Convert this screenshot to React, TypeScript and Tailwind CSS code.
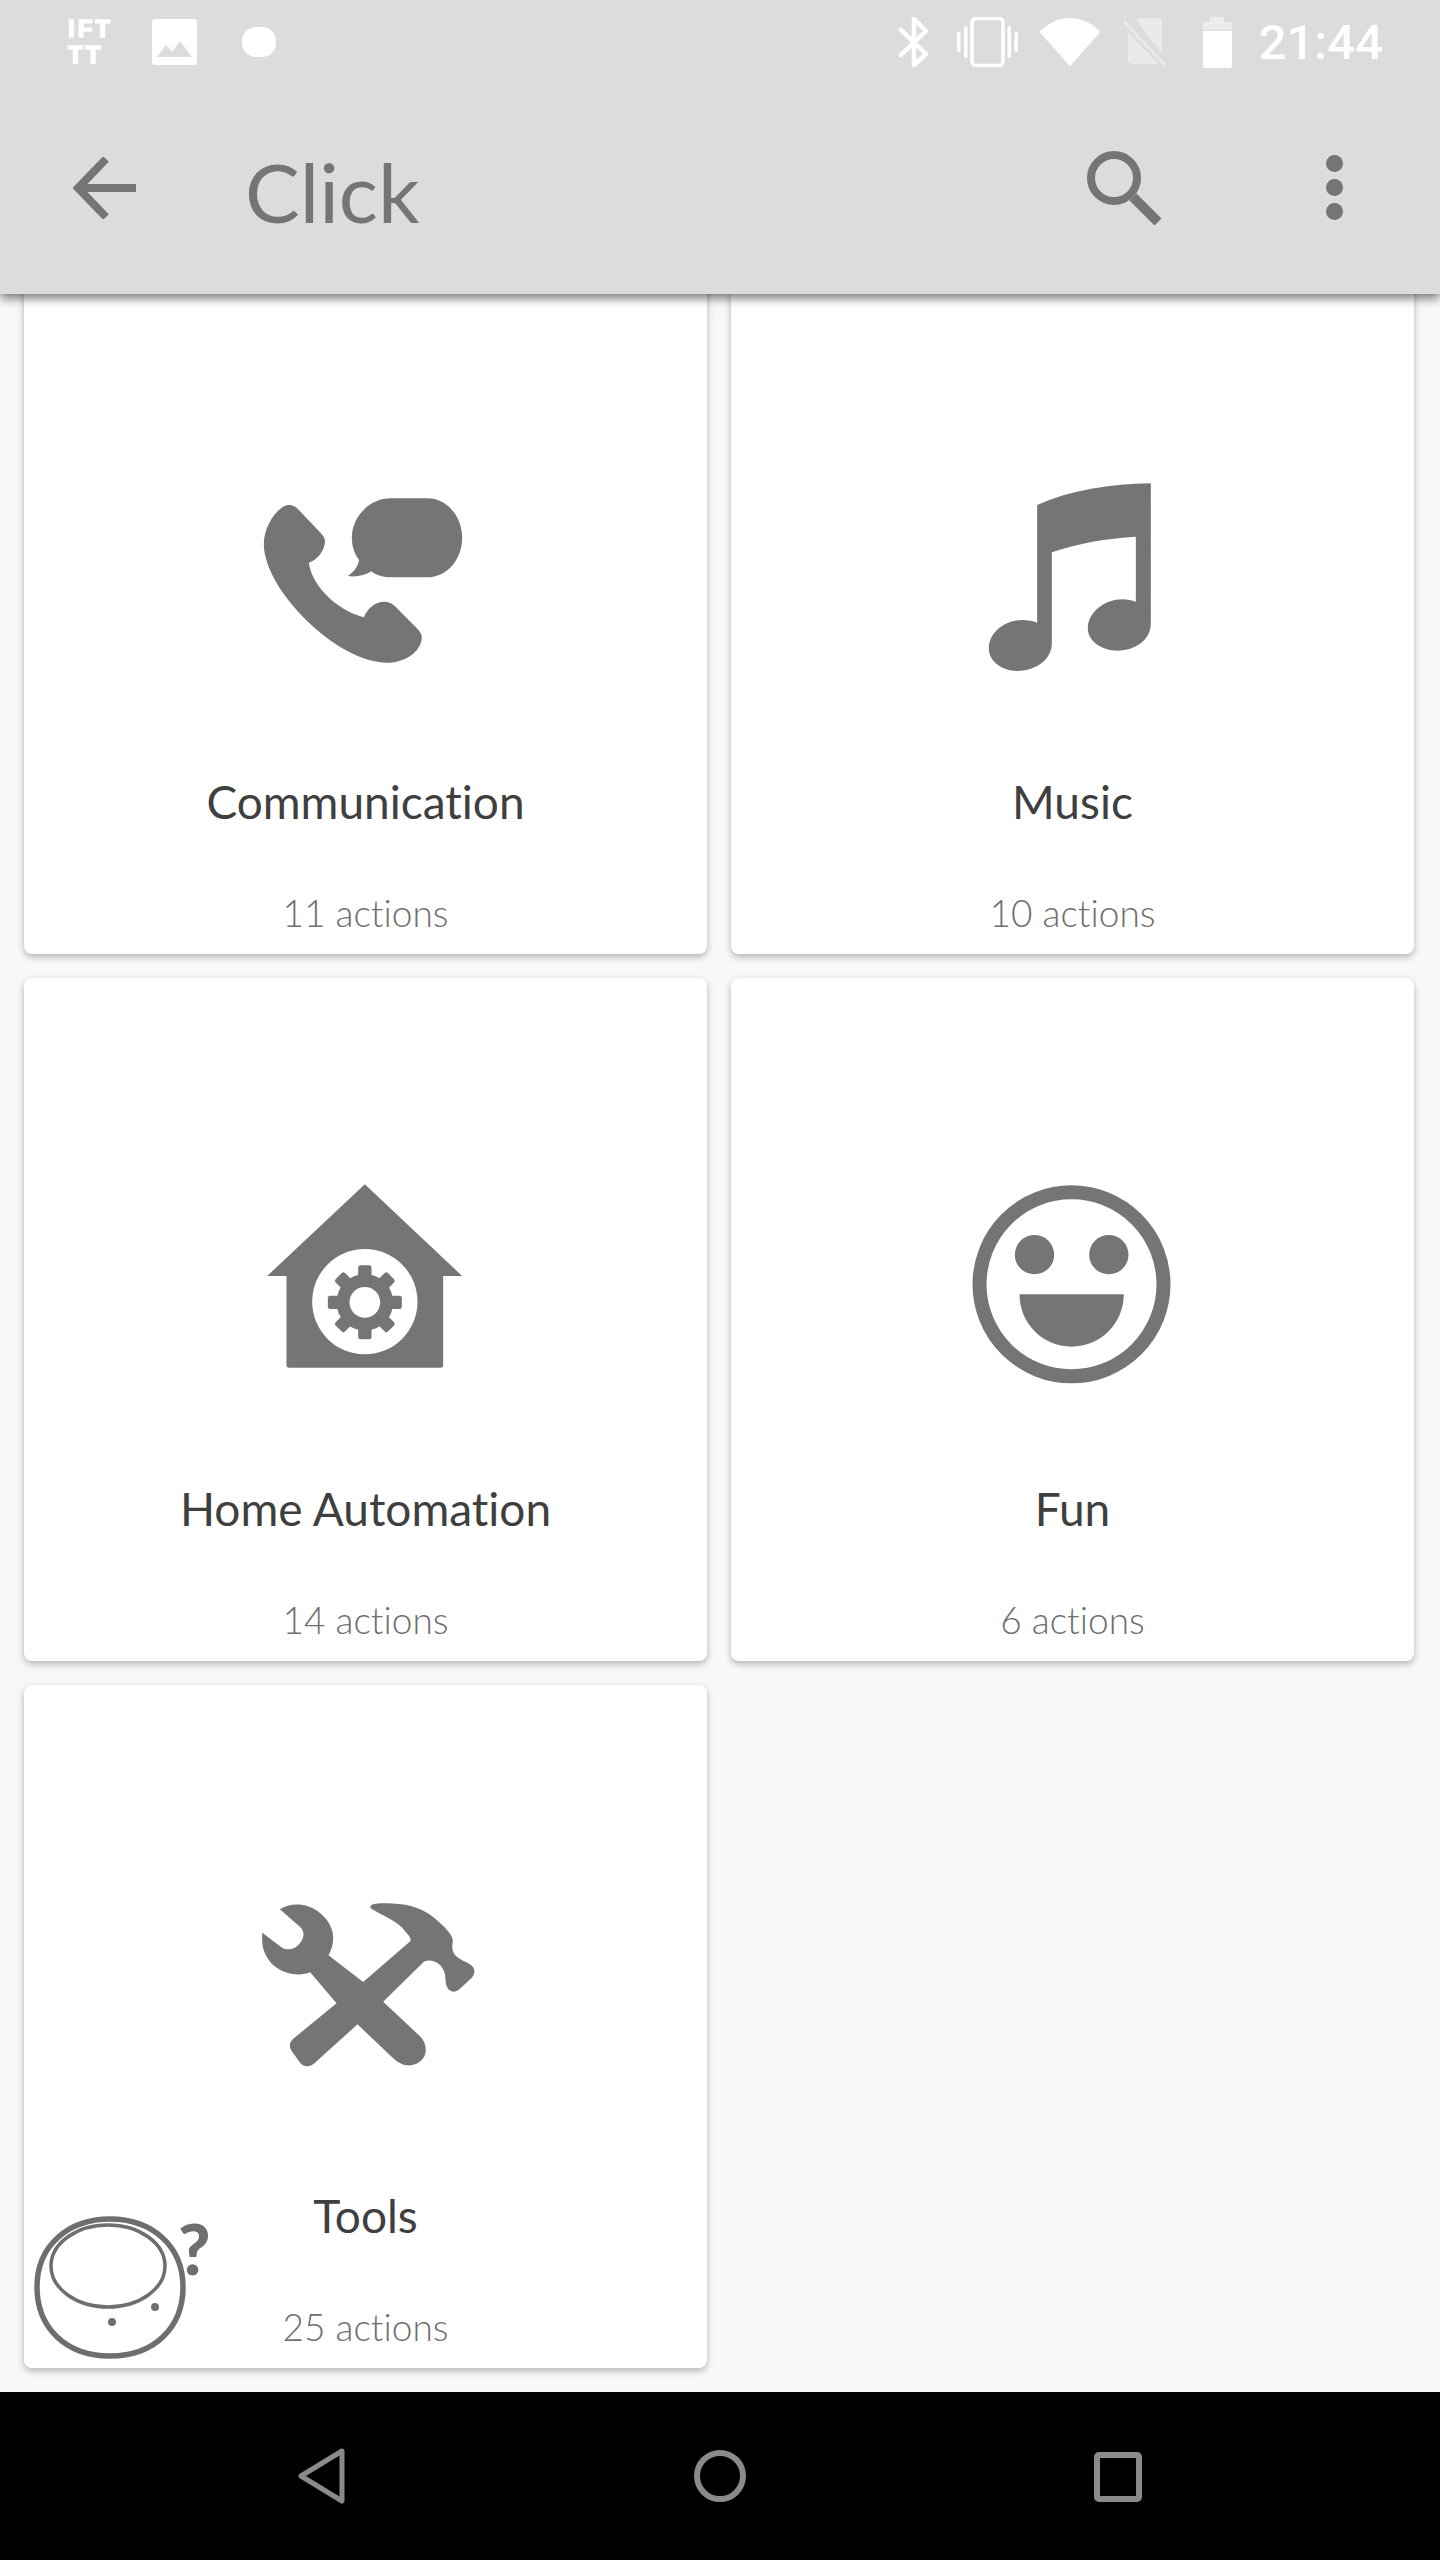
const GRAY = "#757575";

function Gear() {
  const angles = [0, 45, 90, 135, 180, 225, 270, 315];
  return (
    <g fill={GRAY}>
      <circle cx="373" cy="397" r="85" />
      {angles.map((a) => (
        <rect key={a} x="353" y="286" width="40" height="50" rx="7" transform={`rotate(${a} 373 397)`} />
      ))}
      <circle cx="373" cy="397" r="46" fill="#ffffff" />
    </g>
  );
}

function PhoneIcon() {
  return (
    <svg width="240" height="240" viewBox="46.5 -39 720 720" fill={GRAY}>
      <path d="M175 105 C190 105 197 112 205 120 L270 188 C282 200 286 212 282 225 C276 250 258 270 235 278 C245 350 320 420 400 442 C410 415 435 395 460 395 C475 395 485 400 495 410 L562 478 C572 488 577 500 572 515 C560 555 515 578 470 578 C320 578 100 360 100 222 C100 165 145 105 175 105 Z" />
      <path d="M480 85 H590 C650 85 695 140 695 203 C695 268 650 322 590 322 H480 C460 322 438 316 422 304 C405 316 375 322 352 318 C370 306 382 290 386 270 C372 252 364 228 364 203 C364 140 418 85 480 85 Z" />
    </svg>
  );
}

function MusicIcon() {
  return (
    <svg width="240" height="240" viewBox="-22.5 -9 720 720" fill={GRAY}>
      <path d="M230 135 C330 90 450 72 571 70 V490 C571 540 525 572 470 572 C425 572 382 545 382 505 C382 455 435 418 485 418 C500 418 515 421 526 425 V230 C440 235 350 250 274 277 V550 C274 600 225 633 170 633 C125 633 85 605 85 565 C85 515 135 480 185 480 C200 480 218 483 230 488 Z" />
    </svg>
  );
}

function HouseIcon() {
  return (
    <svg width="240" height="240" viewBox="16.5 -18 720 720" fill={GRAY}>
      <path d="M373 43 L665 318 H608 V585 Q608 593 600 593 H146 Q138 593 138 585 V318 H80 Z" />
      <circle cx="373" cy="395" r="158" fill="#ffffff" />
      <Gear />
    </svg>
  );
}

function SmileyIcon() {
  return (
    <svg width="240" height="240" viewBox="7.5 -18 720 720" fill={GRAY}>
      <circle cx="363" cy="343" r="276" fill="none" stroke={GRAY} strokeWidth="42" />
      <circle cx="252" cy="254" r="59" />
      <circle cx="475" cy="254" r="59" />
      <path d="M207 373 H520 C520 460 450 530 363 530 C276 530 207 460 207 373 Z" />
    </svg>
  );
}

function ToolsIcon() {
  return (
    <svg width="240" height="240" viewBox="16.5 -27 720 720" fill={GRAY}>
      <path d="M118 88 C140 72 175 70 200 78 C245 92 280 135 278 175 C278 195 272 212 264 226 L368 306 L510 183 C512 175 505 165 495 155 C470 120 420 105 395 88 C385 82 390 72 405 71 C470 66 530 75 570 105 C600 128 635 160 637 180 C637 195 632 205 640 220 C650 240 685 245 698 262 C706 275 700 288 690 297 L660 325 C645 340 628 338 620 322 C612 305 618 290 610 272 C600 250 575 235 550 245 L428 365 L540 470 C555 485 560 510 552 528 C540 553 505 565 480 550 C470 545 460 537 450 527 L351 433 L225 547 C210 562 192 562 180 550 L155 515 C145 500 145 488 160 475 L288 370 L209 277 C190 285 160 285 140 278 C95 265 65 225 65 180 V158 L125 203 C140 213 165 208 178 190 C190 175 195 155 178 140 Z" />
    </svg>
  );
}

const cards = [
  { title: "Communication", sub: "11 actions", Icon: PhoneIcon },
  { title: "Music", sub: "10 actions", Icon: MusicIcon },
  { title: "Home Automation", sub: "14 actions", Icon: HouseIcon },
  { title: "Fun", sub: "6 actions", Icon: SmileyIcon },
  { title: "Tools", sub: "25 actions", Icon: ToolsIcon },
];

function StatusLeft() {
  return (
    <div className="flex items-center">
      <div className="ml-[68px] flex h-[50px] w-[46px] flex-col justify-between font-['Liberation_Sans',sans-serif] text-[24px] font-bold leading-[24px] text-white">
        <span className="block h-[24px] w-[46px] tracking-[3px] [-webkit-text-stroke:1.5px_#ffffff]">IFT</span>
        <span className="block h-[24px] w-[46px] tracking-[3px] [-webkit-text-stroke:1.5px_#ffffff]">TT</span>
      </div>
      <svg width="45" height="46" viewBox="0 0 45 46" className="ml-[38px]">
        <rect width="45" height="46" rx="3" fill="#fff" />
        <path d="M5 38 L14 26 L20 33 L28 22 L40 38 Z" fill="#dcdcdc" />
      </svg>
      <div className="ml-[45px] h-[30px] w-[34px] rounded-[14px] bg-white" />
    </div>
  );
}

function StatusRight() {
  return (
    <div className="flex items-center">
      <svg width="31" height="50" viewBox="0 0 31 50" fill="none" stroke="#fff" strokeWidth="4.5" strokeLinejoin="round" strokeLinecap="round">
        <path d="M3 13 L28 37 L16 48 V2 L28 14 L3 38" />
      </svg>
      <svg width="61" height="50" viewBox="0 0 61 50" className="ml-[28px]" fill="#fff">
        <rect x="15" y="1.5" width="31" height="47" rx="4" fill="none" stroke="#fff" strokeWidth="3.5" />
        <rect x="0" y="15" width="3.5" height="20" rx="1.5" />
        <rect x="7" y="9" width="3.5" height="32" rx="1.5" />
        <rect x="50.5" y="9" width="3.5" height="32" rx="1.5" />
        <rect x="57.5" y="15" width="3.5" height="20" rx="1.5" />
      </svg>
      <svg width="60" height="48" viewBox="0 0 60 48" className="ml-[22px]" fill="#fff">
        <path d="M1 12 C10 4 20 0 30 0 C40 0 50 4 59 12 C60 13 60 14 59.5 15 L32 46 C31 48 29 48 28 46 L0.5 15 C0 14 0 13 1 12 Z" />
      </svg>
      <svg width="45" height="48" viewBox="0 0 45 48" className="ml-[23px]" fill="#fff" opacity="0.4">
        <path d="M13 2 Q15 0 17 0 H35 Q39 0 39 4 V36 Z" />
        <path d="M5 14 V42 Q5 46 9 46 H36 Z" />
        <path d="M1 4 L42 47" stroke="#fff" strokeWidth="3" />
      </svg>
      <svg width="29" height="51" viewBox="0 0 29 51" className="ml-[35px]" fill="#fff">
        <path d="M7 0 H21 V5 H27 Q29 5 29 7 V13 H0 V7 Q0 5 2 5 H7 Z" opacity="0.45" />
        <path d="M0 14 H29 V49 Q29 51 27 51 H2 Q0 51 0 49 Z" />
      </svg>
      <span className="ml-[27px] font-['Roboto',sans-serif] text-[49px] font-medium leading-none text-white">21:44</span>
    </div>
  );
}

function Toolbar() {
  return (
    <div className="relative h-[210px]">
      <div className="flex h-[210px] items-start">
        <svg width="63" height="62" viewBox="0 0 63 62" className="ml-[73px] mt-[73px]" fill="none" stroke={GRAY} strokeWidth="8">
          <path d="M33 2 L5 31 L33 60 M5 31 H63" />
        </svg>
        <span className="ml-[109px] mt-[57px] font-['Lato',sans-serif] text-[82px] font-normal leading-[100px] text-[#757575]">Click</span>
        <svg width="74" height="74" viewBox="0 0 74 74" className="absolute left-[1087px] top-[67px]" fill="none" stroke={GRAY}>
          <circle cx="27" cy="27" r="23" strokeWidth="8" />
          <path d="M46 46 L71 71" strokeWidth="10" />
        </svg>
        <div className="absolute left-[1326px] top-[71px] flex flex-col gap-[7px]">
          <div className="h-[17px] w-[17px] rounded-full bg-[#757575]" />
          <div className="h-[17px] w-[17px] rounded-full bg-[#757575]" />
          <div className="h-[17px] w-[17px] rounded-full bg-[#757575]" />
        </div>
      </div>
    </div>
  );
}

function HelpBadge() {
  return (
    <div className="absolute left-[33px] top-[2215px] h-[150px] w-[190px]">
      <svg width="154" height="146" viewBox="0 0 154 146" fill="none" stroke="#6d6e71">
        <path d="M4 72 C4 30 36 4 77 4 C118 4 150 30 150 72 C150 112 122 141 77 141 C32 141 4 112 4 72 Z" strokeWidth="5.5" />
        <ellipse cx="75" cy="51" rx="57" ry="41" strokeWidth="3.5" />
        <circle cx="122" cy="92" r="4" fill="#6d6e71" stroke="none" />
        <circle cx="79" cy="107" r="4" fill="#6d6e71" stroke="none" />
      </svg>
      <span className="absolute left-[145px] top-[-2px] font-['Lato',sans-serif] text-[70px] font-black leading-none text-[#6d6e71]">?</span>
    </div>
  );
}

export default function App() {
  return (
    <div className="relative flex h-[2560px] w-[1440px] flex-col overflow-hidden bg-[#f8f8f8]">
      <header className="relative z-10 h-[294px] bg-[#dcdcdc] shadow-[0_4px_10px_rgba(0,0,0,0.55)]">
        <div className="flex h-[84px] items-center justify-between pr-[57px]">
          <StatusLeft />
          <StatusRight />
        </div>
        <Toolbar />
      </header>
      <main className="h-[2098px] overflow-hidden">
        <div className="mt-[-23px] grid grid-cols-[683px_683px] gap-[24px] px-[24px]">
          {cards.map(({ title, sub, Icon }) => (
            <div key={title} className="flex h-[683px] flex-col items-center rounded-[8px] bg-white pt-[186px] shadow-[0_3px_7px_rgba(0,0,0,0.28)]">
              <Icon />
              <div className="mt-[75px] font-['Lato',sans-serif] text-[46px] leading-[60px] text-[#3f3f3f] [font-variant-ligatures:none]">{title}</div>
              <div className="mt-[56px] font-['Lato',sans-serif] text-[37px] font-light leading-[50px] text-[#6f6f6f] [font-variant-ligatures:none]">{sub}</div>
            </div>
          ))}
        </div>
      </main>
      <nav className="flex h-[168px] items-start bg-black pt-[56px]">
        <svg width="48" height="56" viewBox="0 0 48 56" className="ml-[298px]" fill="none" stroke="#8a8a8a" strokeWidth="5" strokeLinejoin="round">
          <path d="M44 3 L3 28 L44 53 Z" />
        </svg>
        <svg width="54" height="56" viewBox="0 0 54 56" className="ml-[347px]" fill="none" stroke="#8a8a8a" strokeWidth="6">
          <circle cx="27" cy="28" r="23" />
        </svg>
        <svg width="48" height="50" viewBox="0 0 48 50" className="ml-[347px] mt-[4px]" fill="none" stroke="#8a8a8a" strokeWidth="6">
          <rect x="3" y="3" width="42" height="44" rx="2" />
        </svg>
      </nav>
      <HelpBadge />
    </div>
  );
}
